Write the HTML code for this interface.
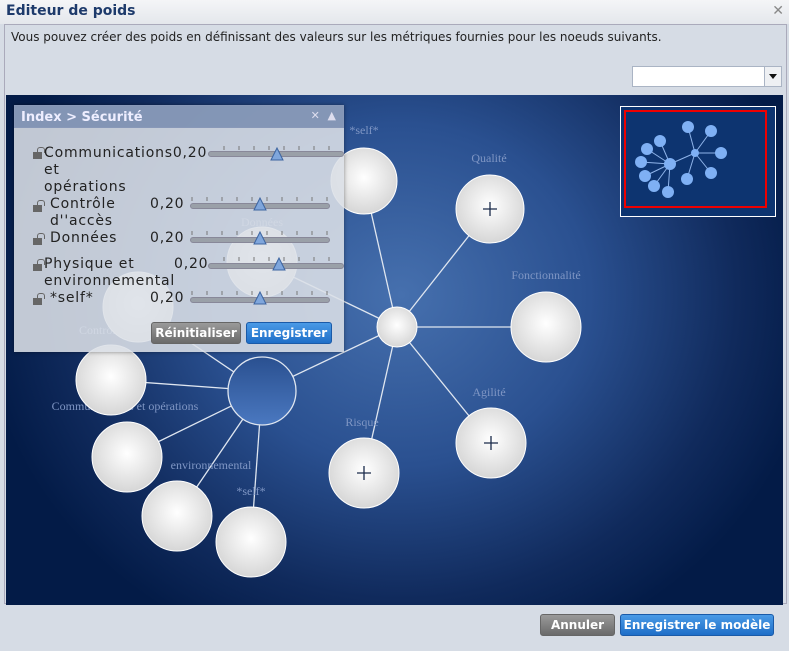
<!DOCTYPE html>
<html><head><meta charset="utf-8"><style>
*{margin:0;padding:0;box-sizing:border-box}
body{width:789px;height:651px;overflow:hidden;background:#d6dce5;font-family:"DejaVu Sans","Liberation Sans",sans-serif;position:relative}
.title{position:absolute;left:0;top:0;width:789px;height:24px;background:linear-gradient(#f4f5f7,#e4e7ec);}
.title b{position:absolute;left:6px;top:3px;font-size:14px;color:#1d3a6b;font-family:"DejaVu Sans",sans-serif}
.x{position:absolute;right:5px;top:3px;color:#888;font-size:14px}
.outer{position:absolute;left:4px;top:24px;width:783px;height:580px;border:1px solid #aab;background:#d6dce5}
.desc{position:absolute;left:11px;top:30px;font-size:12px;color:#222}
.combo{position:absolute;left:632px;top:66px;width:150px;height:21px;border:1px solid #aab4c4;background:#fff}
.combo i{position:absolute;right:0;top:0;width:17px;height:19px;border-left:1px solid #aab4c4;background:#eef0f3}
.combo i:after{content:"";position:absolute;left:4px;top:7px;border:4px solid transparent;border-top:5px solid #111}
.canvas{position:absolute;left:6px;top:95px;width:777px;height:510px;background:radial-gradient(ellipse 420px 380px at 395px 200px,#4670ae 0%,#2a5090 45%,#102a5c 80%,#031b47 100%)}
.panel{position:absolute;left:14px;top:105px;width:330px;height:247px;background:rgba(220,224,231,0.88);box-shadow:0 0 4px rgba(0,0,0,.4)}
.ph{height:23px;background:rgba(120,140,175,0.85);color:#eef;font-weight:bold;font-size:13px;padding:4px 6px;border:1px solid #8898b8}
.ph span{position:absolute;right:8px;top:4px;font-size:11px;color:#dde}
.lbl{position:absolute;font-size:14px;letter-spacing:0.8px;color:#222;line-height:17px}
.lock{position:absolute;width:9px;height:7px;background:#666}
.lock:before{content:"";position:absolute;left:4px;top:-5px;width:6px;height:5px;border:1.5px solid #666;border-bottom:none;border-radius:3px 3px 0 0}
.track{position:absolute;height:6px;background:#9aa0a8;border-radius:3px;border:1px solid #889}
.btn{position:absolute;height:22px;color:#fff;font-weight:bold;font-size:12px;text-align:center;line-height:21px;border-radius:3px}
.gray{background:linear-gradient(#9a9a9a,#6a6a6a);border:1px solid #666}
.blue{background:linear-gradient(#4a9ae6,#1e6ec8);border:1px solid #1a5aa8}
</style></head><body>
<div class="title"><b>Editeur de poids</b><span class="x">✕</span></div>
<div class="outer"></div>
<div class="desc">Vous pouvez créer des poids en définissant des valeurs sur les métriques fournies pour les noeuds suivants.</div>
<div class="combo"><i></i></div>
<div class="canvas"></div>
<svg style="position:absolute;left:0;top:0" width="789" height="651">
<defs>
<radialGradient id="w" cx="0.5" cy="0.45" r="0.55"><stop offset="0" stop-color="#fff"/><stop offset="1" stop-color="#d6d6d6"/></radialGradient>
<linearGradient id="b" x1="0" y1="0" x2="0" y2="1"><stop offset="0" stop-color="#2a5090"/><stop offset="1" stop-color="#4a78c0"/></linearGradient>
</defs>
<g stroke="#dfe6f0" stroke-width="1.3">
<line x1="397" y1="327" x2="364" y2="181"/><line x1="397" y1="327" x2="490" y2="209"/><line x1="397" y1="327" x2="546" y2="327"/><line x1="397" y1="327" x2="491" y2="443"/><line x1="397" y1="327" x2="364" y2="473"/><line x1="397" y1="327" x2="262" y2="391"/><line x1="397" y1="327" x2="262" y2="262"/>
<line x1="262" y1="391" x2="138" y2="307"/><line x1="262" y1="391" x2="111" y2="380"/><line x1="262" y1="391" x2="127" y2="457"/><line x1="262" y1="391" x2="177" y2="516"/><line x1="262" y1="391" x2="251" y2="542"/>
</g>
<g fill="#7f96c4" font-family="Liberation Serif,serif" font-size="12" text-anchor="middle">
<text x="364" y="134">*self*</text><text x="489" y="162">Qualité</text><text x="546" y="279">Fonctionnalité</text><text x="489" y="396">Agilité</text><text x="362" y="426">Risque</text><text x="125" y="410">Communications et opérations</text><text x="211" y="469">environnemental</text><text x="251" y="495">*self*</text><text x="262" y="226">Données</text><text x="100" y="334">Contrôle</text>
</g>
<g fill="url(#w)" stroke="#fff" stroke-width="1">
<circle cx="364" cy="181" r="33"/><circle cx="490" cy="209" r="34"/><circle cx="546" cy="327" r="35"/><circle cx="491" cy="443" r="35"/><circle cx="364" cy="473" r="35"/><circle cx="397" cy="327" r="20"/><circle cx="262" cy="262" r="35"/><circle cx="138" cy="307" r="35"/><circle cx="111" cy="380" r="35"/><circle cx="127" cy="457" r="35"/><circle cx="177" cy="516" r="35"/><circle cx="251" cy="542" r="35"/>
</g>
<circle cx="262" cy="391" r="34" fill="url(#b)" stroke="#dfe6f0" stroke-width="1.3"/>
<g stroke="#1a2a4a" stroke-width="1.3"><path d="M483 209h14M490 202v14M484 443h14M491 436v14M357 473h14M364 466v14"/></g>
<rect x="620.5" y="106.5" width="155" height="110" fill="#0d3470" stroke="#fff"/>
<rect x="625" y="111" width="141" height="96" fill="none" stroke="#e00" stroke-width="2"/>
<g stroke="#8fb4ea" stroke-width="1"><path d="M695 153L688 127M695 153L711 131M695 153L721 153M695 153L711 173M695 153L687 179M695 153L670 164M670 164L647 149M670 164L641 162M670 164L645 176M670 164L654 186M670 164L668 192M670 164L660 141"/></g>
<g fill="#7fb0f4"><circle cx="688" cy="127" r="6"/><circle cx="711" cy="131" r="6"/><circle cx="721" cy="153" r="6"/><circle cx="711" cy="173" r="6"/><circle cx="687" cy="179" r="6"/><circle cx="660" cy="141" r="6"/><circle cx="670" cy="164" r="6"/><circle cx="647" cy="149" r="6"/><circle cx="641" cy="162" r="6"/><circle cx="645" cy="176" r="6"/><circle cx="654" cy="186" r="6"/><circle cx="668" cy="192" r="6"/><circle cx="695" cy="153" r="4"/></g>
</svg>
<div class="panel"><div class="ph">Index &gt; Sécurité<span>✕ &nbsp;▲</span></div></div>
<div class="lock" style="left:33px;top:152px"></div><div class="lbl" style="left:44px;top:145px">Communications0,20<br>et<br>opérations</div>
<div class="lock" style="left:33px;top:205px"></div><div class="lbl" style="left:50px;top:196px">Contrôle<br>d''accès</div><div class="lbl" style="left:150px;top:196px">0,20</div>
<div class="lock" style="left:33px;top:238px"></div><div class="lbl" style="left:50px;top:230px">Données</div><div class="lbl" style="left:150px;top:230px">0,20</div>
<div class="lock" style="left:33px;top:264px"></div><div class="lbl" style="left:44px;top:256px">Physique et<br>environnemental</div><div class="lbl" style="left:174px;top:256px">0,20</div>
<div class="lock" style="left:33px;top:298px"></div><div class="lbl" style="left:50px;top:290px">*self*</div><div class="lbl" style="left:150px;top:290px">0,20</div>
<div class="track" style="left:208px;top:151px;width:136px"></div>
<div class="track" style="left:190px;top:203px;width:140px"></div>
<div class="track" style="left:190px;top:237px;width:140px"></div>
<div class="track" style="left:208px;top:263px;width:136px"></div>
<div class="track" style="left:190px;top:297px;width:140px"></div>
<svg style="position:absolute;left:0;top:0" width="789" height="651"><g fill="#7fa6dc" stroke="#3c64a0"><path d="M277 148l-6 12h12z"/><path d="M260 198l-6 12h12z"/><path d="M260 232l-6 12h12z"/><path d="M279 258l-6 12h12z"/><path d="M260 292l-6 12h12z"/></g>
<g stroke="#777"><path d="M224 146v4M239 146v4M254 146v4M269 146v4M284 146v4M299 146v4M314 146v4M329 146v4M192 197v4M207 197v4M222 197v4M237 197v4M252 197v4M267 197v4M282 197v4M297 197v4M312 197v4M327 197v4M192 231v4M207 231v4M222 231v4M237 231v4M252 231v4M267 231v4M282 231v4M297 231v4M312 231v4M327 231v4M224 257v4M239 257v4M254 257v4M269 257v4M284 257v4M299 257v4M314 257v4M329 257v4M192 291v4M207 291v4M222 291v4M237 291v4M252 291v4M267 291v4M282 291v4M297 291v4M312 291v4M327 291v4"/></g></svg>
<div class="btn gray" style="left:151px;top:322px;width:90px">Réinitialiser</div>
<div class="btn blue" style="left:246px;top:322px;width:86px">Enregistrer</div>
<div class="btn gray" style="left:540px;top:614px;width:75px">Annuler</div>
<div class="btn blue" style="left:620px;top:614px;width:154px">Enregistrer le modèle</div>
</body></html>
